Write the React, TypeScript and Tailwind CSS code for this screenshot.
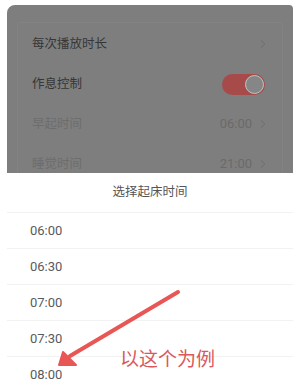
import { ChevronRight } from 'lucide-react';

const times = ['06:00', '06:30', '07:00', '07:30', '08:00'];

function Row({ label, dim, value, children }: { label: string; dim?: boolean; value?: string; children?: React.ReactNode }) {
  return (
    <div className="flex h-10 items-center justify-between pl-[14px] pr-[17px]">
      <span className={`text-[12.5px] ${dim ? 'text-[#6d6d6d]' : 'text-[#363636]'}`}>{label}</span>
      {children ?? (
        <div className="-mr-[5px] flex items-center gap-[4px]">
          {value && <span className="text-[13px] text-[#6a6a6a]">{value}</span>}
          <ChevronRight size={14} strokeWidth={1.6} className="text-[#6a6a6a]" />
        </div>
      )}
    </div>
  );
}

export default function App() {
  return (
    <div
      className="relative h-[391px] w-[300px] overflow-hidden bg-white"
      style={{ fontFamily: "Roboto, 'Noto Sans CJK SC', sans-serif" }}
    >
      {/* dimmed settings page */}
      <div className="mx-[7px] mt-[5px] h-[168px] overflow-hidden rounded-tl-lg rounded-tr-sm bg-[#7e7e7e] px-[10px] pt-[17px]">
        <div className="rounded-t border border-b-0 border-[#838383] pt-px">
          <Row label="每次播放时长" />
          <Row label="作息控制">
            <div className="flex h-[21px] w-[43px] items-center justify-end rounded-full bg-[#a64a4a] pr-px">
              <div className="h-[19px] w-[19px] rounded-full border-[1.5px] border-[#c4c4c4] bg-[#868686]" />
            </div>
          </Row>
          <Row label="早起时间" dim value="06:00" />
          <Row label="睡觉时间" dim value="21:00" />
        </div>
      </div>

      {/* bottom sheet */}
      <div className="mx-[7px]">
        <div className="flex h-10 items-center justify-center border-b border-[#f2f2f2] text-[12.5px] text-[#555]">
          选择起床时间
        </div>
        {times.map((t) => (
          <div key={t} className="flex h-9 items-center border-b border-[#f2f2f2] pl-[23px] text-[13px] text-[#5a5a5a]">
            {t}
          </div>
        ))}
      </div>

      {/* annotation */}
      <svg className="absolute left-0 top-0" width="300" height="391" viewBox="0 0 300 391">
        <line x1="178" y1="292" x2="70" y2="356" stroke="#e85656" strokeWidth="4" strokeLinecap="round" />
        <polygon points="59,365 63,352 76,365" fill="#e85656" stroke="#e85656" strokeWidth="2" strokeLinejoin="round" />
      </svg>
      <div className="absolute left-[120px] top-[350px] text-[19px] leading-none text-[#d9585b]">以这个为例</div>
    </div>
  );
}
